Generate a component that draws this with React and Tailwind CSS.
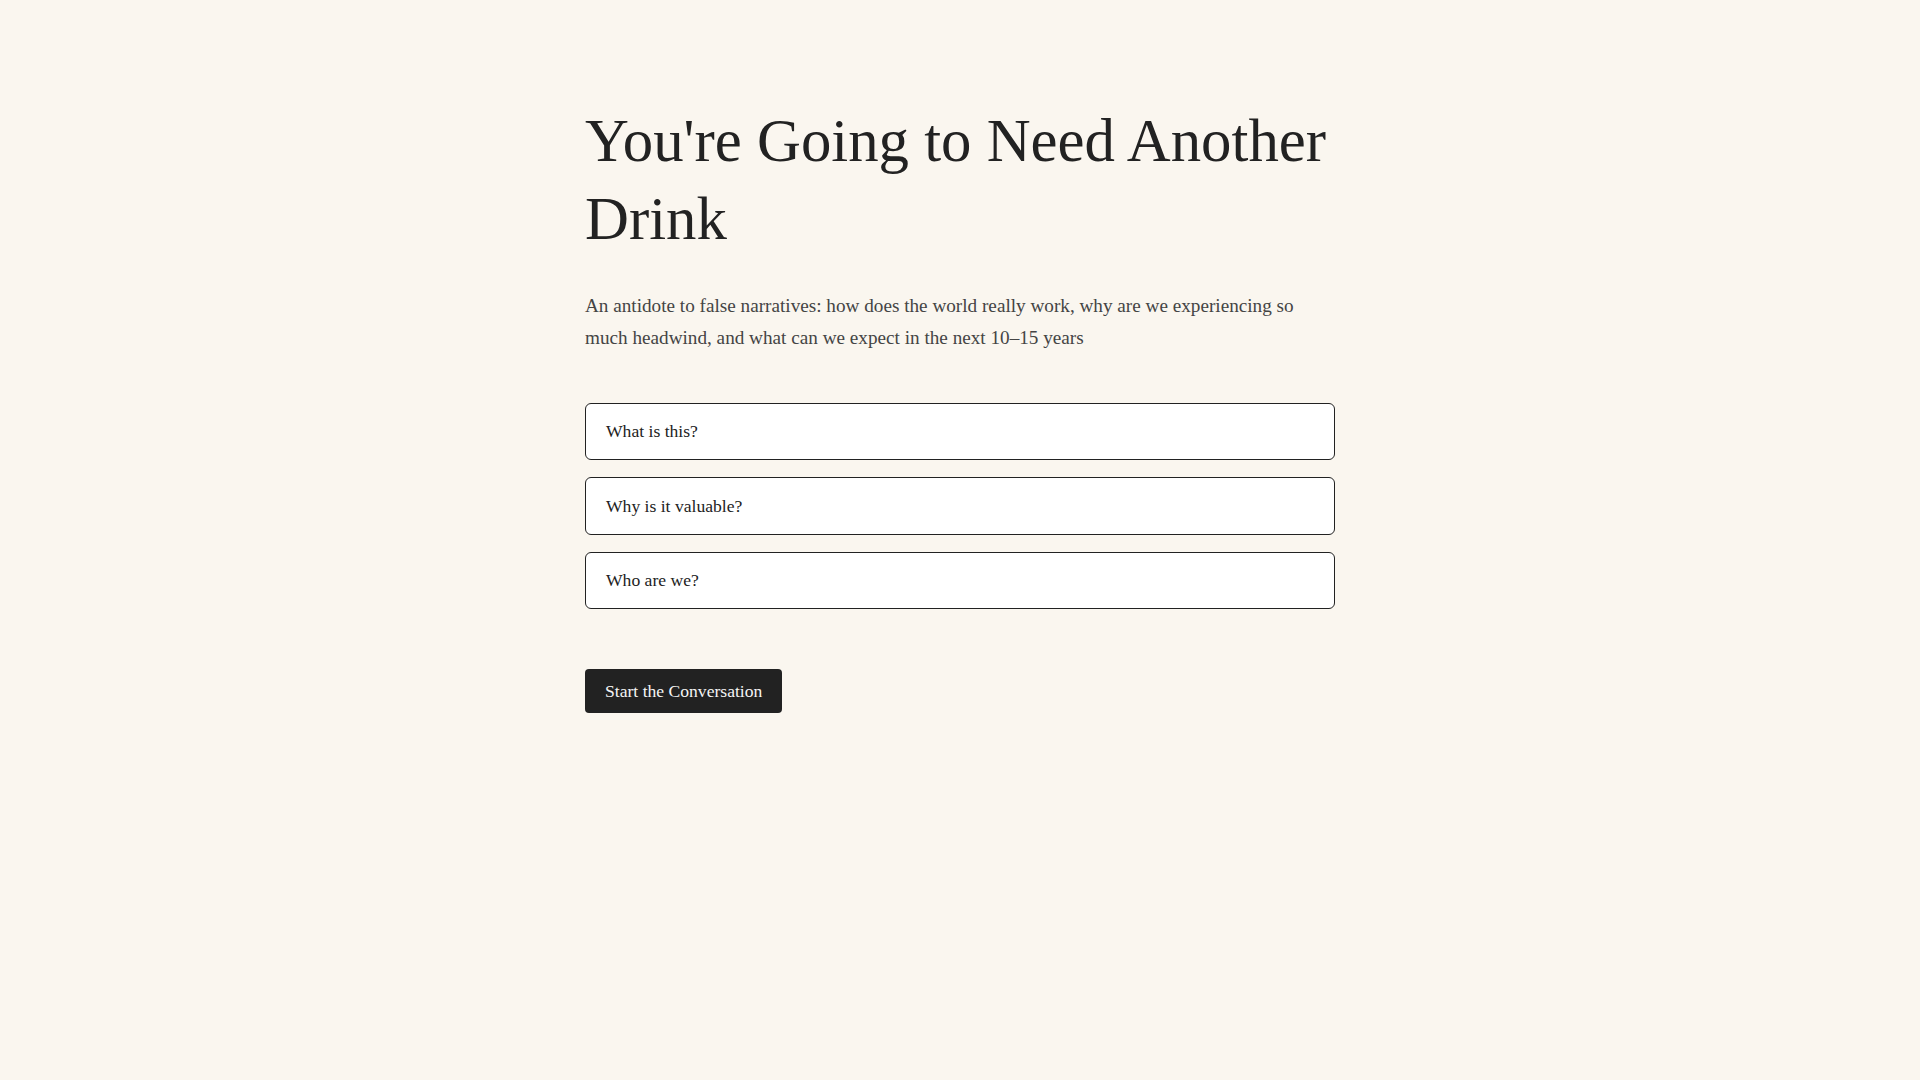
import { useState } from 'react';

const questions = ['What is this?', 'Why is it valuable?', 'Who are we?'];

const App = () => {
  const [open, setOpen] = useState(null);

  return (
    <div className="min-h-screen bg-[#faf6ef] font-['Liberation_Serif','Times_New_Roman',serif] text-[#222]">
      <div className="mx-auto w-[750px] pt-[102px]">
        <h1 className="text-[60.8px] leading-[78px] font-normal">
          You're Going to Need Another Drink
        </h1>
        <p className="mt-[32px] text-[19.2px] leading-[31.7px] text-[#444]">
          An antidote to false narratives: how does the world really work, why are we experiencing so much
          headwind, and what can we expect in the next 10–15 years
        </p>

        <div className="mt-[49.5px] flex flex-col gap-[17px]">
          {questions.map((q, i) => (
            <button
              key={q}
              onClick={() => setOpen(open === i ? null : i)}
              className="w-full rounded-md border border-[#222] bg-white px-5 py-[17.25px] text-left text-[17.6px] leading-[21px] text-[#222]"
            >
              {q}
            </button>
          ))}
        </div>

        <button className="mt-[60px] rounded bg-[#222] px-5 py-3 text-[17.6px] leading-[20px] text-[#f5f5f5]">
          Start the Conversation
        </button>
      </div>
    </div>
  );
};

export default App;
